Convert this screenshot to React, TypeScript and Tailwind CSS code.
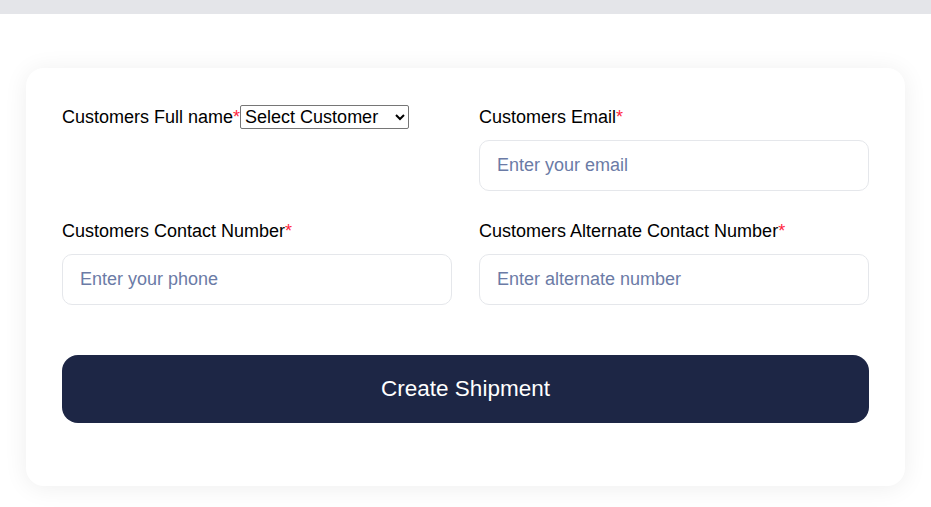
import type React from "react";

const inputCls =
    "w-full h-[51px] rounded-[10px] border border-[#e5e7eb] bg-white px-[17px] text-lg text-black outline-none placeholder:text-[#6b7ba6]";

const Label: React.FC<{ text: string }> = ({ text }) => (
    <label className="text-lg leading-7 text-black">
        {text}
        <span className="text-[#ff1f3d]">*</span>
    </label>
);

export default function App() {
    return (
        <div className="min-h-[507px] bg-white font-['Liberation_Sans',Arial,sans-serif]">
            {/* top bar */}
            <div className="h-[14px] bg-[#e4e5e9]" />

            <div className="px-[26px] pt-[54px] pb-[21px]">
                <div className="rounded-[18px] bg-white px-9 pt-[35px] pb-[63px] shadow-[0_2px_24px_rgba(0,0,0,0.07)]">
                    <div className="grid grid-cols-2 gap-x-[27px] gap-y-[26px]">
                        {/* Full name + select */}
                        <div className="text-lg leading-7">
                            <Label text="Customers Full name" />
                            <select className="rounded-[2px] border border-[#767676] pr-[13px] text-lg text-black">
                                <option>Select Customer</option>
                            </select>
                        </div>

                        <div className="flex flex-col">
                            <div className="mb-[9px]">
                                <Label text="Customers Email" />
                            </div>
                            <input type="email" placeholder="Enter your email" className={inputCls} />
                        </div>

                        <div className="flex flex-col">
                            <div className="mb-[9px]">
                                <Label text="Customers Contact Number" />
                            </div>
                            <input type="tel" placeholder="Enter your phone" className={inputCls} />
                        </div>

                        <div className="flex flex-col">
                            <div className="mb-[9px]">
                                <Label text="Customers Alternate Contact Number" />
                            </div>
                            <input type="tel" placeholder="Enter alternate number" className={inputCls} />
                        </div>
                    </div>

                    <button className="mt-[50px] flex h-[68px] w-full items-center justify-center rounded-2xl bg-[#1d2645] text-[22.5px] text-white">
                        Create Shipment
                    </button>
                </div>
            </div>
        </div>
    );
}
